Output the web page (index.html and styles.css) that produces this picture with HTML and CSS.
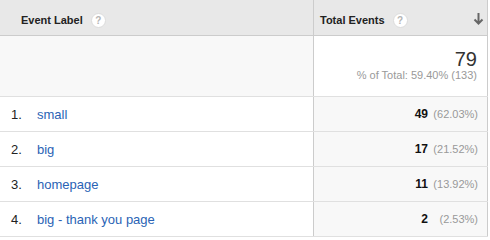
FILE: index.html
```html
<!DOCTYPE html>
<html>
<head>
<meta charset="utf-8">
<link rel="stylesheet" href="styles.css">
</head>
<body>
<div class="table">
  <div class="row head">
    <div class="cell left">
      <span class="htext">Event Label</span><span class="help">?</span>
    </div>
    <div class="cell right">
      <span class="htext">Total Events</span><span class="help">?</span>
      <svg class="sort" width="11" height="12" viewBox="0 0 11 12"><path d="M5.5 0V10.5M1.5 6.5L5.5 10.5L9.5 6.5" stroke="#666" stroke-width="2" fill="none"/></svg>
    </div>
  </div>
  <div class="row total">
    <div class="cell left"></div>
    <div class="cell right">
      <div class="big">79</div>
      <div class="sub">% of Total: 59.40% (133)</div>
    </div>
  </div>
  <div class="row data">
    <div class="cell left"><span class="idx">1.</span><a class="lbl">small</a></div>
    <div class="cell right"><span class="val">49</span><span class="pct">(62.03%)</span></div>
  </div>
  <div class="row data">
    <div class="cell left"><span class="idx">2.</span><a class="lbl">big</a></div>
    <div class="cell right"><span class="val">17</span><span class="pct">(21.52%)</span></div>
  </div>
  <div class="row data">
    <div class="cell left"><span class="idx">3.</span><a class="lbl">homepage</a></div>
    <div class="cell right"><span class="val">11</span><span class="pct">(13.92%)</span></div>
  </div>
  <div class="row data">
    <div class="cell left"><span class="idx">4.</span><a class="lbl">big - thank you page</a></div>
    <div class="cell right"><span class="val">2</span><span class="pct">(2.53%)</span></div>
  </div>
</div>
</body>
</html>
```
FILE: styles.css
```css
html, body {
  margin: 0;
  padding: 0;
  background: #fff;
}
body {
  font-family: "Liberation Sans", Arial, sans-serif;
  color: #222;
}
.table {
  width: 488px;
  display: flex;
  flex-direction: column;
}
.row {
  display: flex;
  border-bottom: 1px solid #e0e0e0;
}
.cell.left {
  width: 313px;
  box-sizing: border-box;
  display: flex;
  align-items: center;
}
.cell.right {
  width: 175px;
  box-sizing: border-box;
  border-left: 1px solid #cccccc;
  border-right: 1px solid #cccccc;
  display: flex;
  align-items: center;
}
.head {
  height: 36px;
  box-sizing: border-box;
  background: #e8e8e8;
  border-bottom: 1px solid #cccccc;
}
.head .cell {
  padding-top: 5px;
}
.head .left {
  padding-left: 21px;
}
.head .right {
  padding-left: 6px;
  padding-right: 3px;
}
.htext {
  font-size: 11px;
  font-weight: bold;
  color: #222;
}
.help {
  width: 13px;
  height: 13px;
  border-radius: 50%;
  background: #fff;
  border: 1px solid #dcdcdc;
  color: #b5b5b5;
  font-size: 10px;
  font-weight: bold;
  line-height: 13px;
  text-align: center;
  margin-left: 8px;
}
.sort {
  margin-left: auto;
  margin-top: -2px;
}
.total {
  height: 61px;
  box-sizing: border-box;
}
.total .left {
  background: #f8f8f8;
}
.total .right {
  flex-direction: column;
  align-items: flex-end;
  justify-content: flex-start;
  padding-top: 13px;
  padding-right: 10px;
  background: #fff;
}
.big {
  font-size: 20px;
  line-height: 20px;
  color: #333;
}
.sub {
  font-size: 11px;
  line-height: 12px;
  color: #999;
}
.data {
  height: 35px;
  box-sizing: border-box;
}
.data .left {
  padding-left: 11px;
  font-size: 13px;
}
.idx {
  width: 26px;
  color: #222;
}
.lbl {
  color: #2a63b5;
  text-decoration: none;
}
.data .right {
  background: #f8f8f8;
  justify-content: flex-end;
  padding-right: 9px;
}
.val {
  font-size: 12px;
  font-weight: bold;
  color: #111;
}
.pct {
  width: 50px;
  text-align: right;
  font-size: 11px;
  color: #999;
}
```
